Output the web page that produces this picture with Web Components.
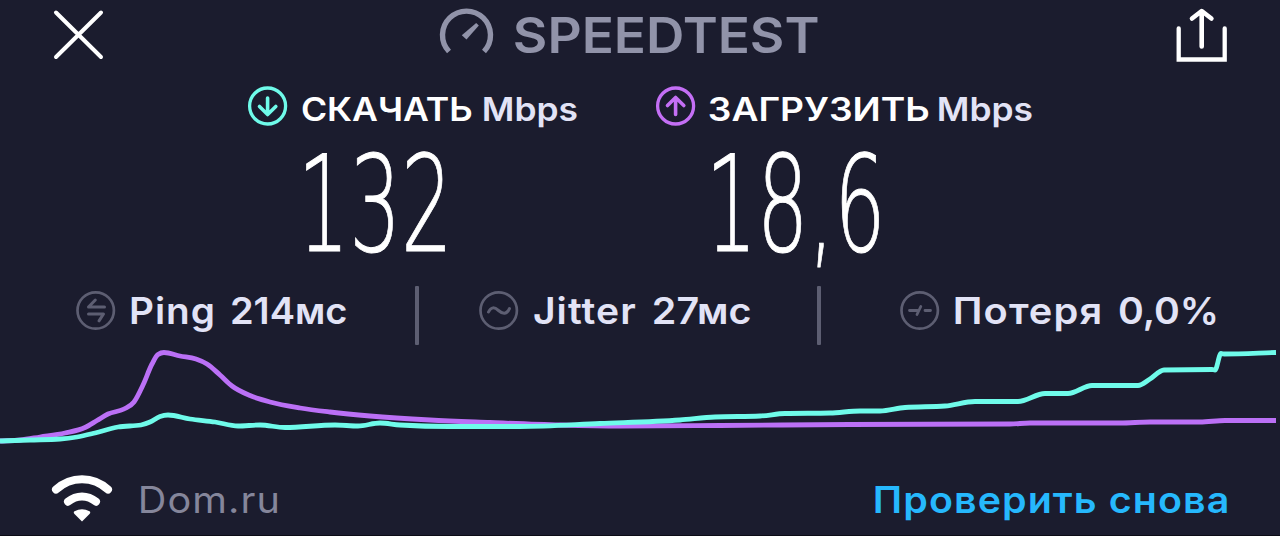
<!DOCTYPE html>
<html lang="ru">
<head>
<meta charset="utf-8">
<title>Speedtest</title>
<style>
  body {
    margin: 0;
    background: #1b1c2e;
    font-family: Inter, "Liberation Sans", sans-serif;
  }
</style>
</head>
<body>
<speed-result></speed-result>

<script>
const pen = document.createElement('canvas').getContext('2d');

// One line of text whose glyphs fill a box of width x cap height.
class FitText extends HTMLElement {
  connectedCallback() {
    const width = Number(this.getAttribute('width'));
    const cap = Number(this.getAttribute('cap'));
    const spacing = this.getAttribute('spacing') || '0px';
    const style = getComputedStyle(this);
    const font = (size) => `${style.fontWeight} ${size}px ${style.fontFamily}`;
    pen.letterSpacing = '0px';
    pen.font = font(1000);
    const size = cap * 1000 / pen.measureText('H').actualBoundingBoxAscent;
    pen.font = font(size);
    pen.letterSpacing = spacing;
    const m = pen.measureText(this.textContent);
    const scale = width / (m.actualBoundingBoxLeft + m.actualBoundingBoxRight);
    const up = m.fontBoundingBoxAscent;
    const down = m.fontBoundingBoxDescent;
    const baseline = (size - up - down) / 2 + up;
    this.attachShadow({ mode: 'open' });
    this.shadowRoot.innerHTML = `
      <style>
        :host {
          display: block;
          flex: none;
          width: ${width}px;
          height: ${cap}px;
        }
        span {
          display: block;
          width: max-content;
          white-space: pre;
          font-size: ${size}px;
          line-height: ${size}px;
          letter-spacing: ${spacing};
          transform-origin: 0 0;
          transform: translate(${m.actualBoundingBoxLeft * scale}px, ${cap - baseline}px) scaleX(${scale});
        }
      </style>
      <span><slot></slot></span>
    `;
  }
}

const ICONS = {
  close: [51, 51, '<path d="M3 3.5 48 48M48 3.5 3 48" stroke-width="4"/>'],
  gauge: [54, 48, `
    <path d="M9 42.500A24 24 0 1 1 44 42.500" stroke-width="5.400" stroke-linecap="butt"/>
    <path d="M36.200 14 38.800 16.500 26.500 30.500 21.800 26.200Z" fill="currentColor" stroke="none"/>`],
  share: [52, 54, `
    <path d="M2.700 19.500V50.500H48.700V19.500" stroke-width="4.300" stroke-linejoin="miter"/>
    <path d="M25.700 37.500V2.500M16 9.500 25.700 2 35.400 9.500" stroke-width="4.600"/>`],
  down: [40, 40, `
    <circle cx="19.600" cy="20" r="18" stroke-width="3.300"/>
    <path d="M19.600 12V28M11.500 20.500 19.600 28.500 27.800 20.500" stroke-width="3.600"/>`],
  up: [40, 40, `
    <circle cx="19.600" cy="20" r="18" stroke-width="3.300"/>
    <path d="M19.600 28.500V12M11.500 19.500 19.600 11.500 27.800 19.500" stroke-width="3.600"/>`],
  ping: [40, 40, `
    <circle cx="19.700" cy="19.500" r="18.200" stroke-width="2.700"/>
    <path d="M28.500 16H12.500L19.300 9M12.500 23H27.500L23 29.800" stroke-width="3"/>`],
  jitter: [40, 40, `
    <circle cx="19.700" cy="19.500" r="18.200" stroke-width="2.700"/>
    <path d="M9.500 21C12 15.500 15.500 16 19.500 19.500S27.500 24 30.500 17.500" stroke-width="3"/>`],
  loss: [40, 40, `
    <circle cx="19.700" cy="19.500" r="18.200" stroke-width="2.700"/>
    <path d="M9.500 19.500H17.500M17 23.500 20.800 15.500M25 19.500H30.500" stroke-width="2.800"/>`],
  wifi: [60, 46, `
    <path d="M4 15.500C19 1.800 41 1.800 56 15.500" stroke-width="8"/>
    <path d="M16 27.700C24.500 20.800 35.500 20.800 44 27.700" stroke-width="8"/>
    <path d="M22.500 37.300Q30 33 37.500 37.300 39 38.500 37.500 40L30 47.500 22.500 40Q21 38.500 22.500 37.300Z" fill="currentColor" stroke="none"/>`]
};

class UiIcon extends HTMLElement {
  connectedCallback() {
    const [w, h, body] = ICONS[this.getAttribute('name')];
    this.attachShadow({ mode: 'open' });
    this.shadowRoot.innerHTML = `
      <style>
        :host { display: block; flex: none; width: ${w}px; height: ${h}px; }
        svg { display: block; overflow: visible; }
      </style>
      <svg width="${w}" height="${h}" fill="none" stroke="currentColor" stroke-linecap="round" stroke-linejoin="round">${body}</svg>
    `;
  }
}

class SpeedMetric extends HTMLElement {
  connectedCallback() {
    this.attachShadow({ mode: 'open' });
    this.shadowRoot.innerHTML = `
      <style>
        :host { display: block; }
        .label {
          display: flex;
          align-items: center;
          height: 40px;
          font-weight: 600;
          color: #fff;
        }
        ui-icon { color: var(--accent); margin-right: var(--label-gap, 14px); }
        .title { padding-top: 5px; }
        .unit { padding: 5px 0 0 var(--unit-gap, 12px); color: #e2e3f6; }
        .value {
          padding: 27px 0 0 58px;
          font-family: "DejaVu Sans", sans-serif;
          font-weight: 200;
          color: #fff;
          -webkit-text-stroke: 1px #fff;
        }
      </style>
      <div class="label">
        <ui-icon name="${this.getAttribute('icon')}"></ui-icon>
        <div class="title"><slot name="title"></slot></div>
        <div class="unit"><slot name="unit"></slot></div>
      </div>
      <div class="value"><slot></slot></div>
    `;
  }
}

class StatItem extends HTMLElement {
  connectedCallback() {
    this.attachShadow({ mode: 'open' });
    this.shadowRoot.innerHTML = `
      <style>
        :host {
          display: flex;
          align-items: center;
          font-weight: 600;
          color: #e2e3f6;
        }
        ui-icon { color: #5d5e72; margin-right: 15px; }
        slot[name="value"] { display: block; margin-left: 19px; }
      </style>
      <ui-icon name="${this.getAttribute('icon')}"></ui-icon>
      <slot></slot>
      <slot name="value"></slot>
    `;
  }
}

const DOWNLOAD = [[0, 441], [30, 440], [60, 439], [77, 437], [95, 433], [118, 427], [141, 425], [150, 422],
  [160, 416.5], [168, 415], [190, 419], [215, 422], [238, 426], [260, 425], [285, 427.5], [335, 425],
  [358, 426], [380, 423], [400, 425], [450, 426.5], [520, 426.5], [600, 423.5], [680, 420], [715, 417],
  [760, 416], [785, 413.5], [830, 413], [860, 411], [880, 411], [905, 407.5], [945, 406], [975, 401.5],
  [1018, 401.5], [1045, 393.5], [1068, 393.5], [1092, 385.5], [1138, 385.5], [1150, 379], [1164, 370],
  [1212, 369.5], [1215, 370], [1221, 353.5], [1224, 354], [1276, 352.5]];
const UPLOAD = [[0, 441], [20, 440], [40, 437], [65, 433], [85, 427.5], [97, 420.5], [108, 414], [124, 409],
  [134, 402], [143, 385], [152, 364], [158, 354.5], [164, 352.5], [180, 356], [196, 359], [207, 364], [220, 375],
  [232, 386], [250, 395.5], [270, 402], [300, 408], [330, 412], [370, 416], [430, 420], [490, 422.5],
  [560, 425], [620, 426], [720, 425.5], [850, 424.5], [1010, 424], [1030, 423], [1120, 423], [1150, 422],
  [1200, 422], [1225, 420.5], [1276, 420.5]];

// Monotone cubic through the samples
function curve(points) {
  const step = (i) => points[i + 1][0] - points[i][0];
  const slope = (i) => (points[i + 1][1] - points[i][1]) / step(i);
  const tangents = points.map((p, i) => {
    if (i === 0) return slope(0);
    if (i === points.length - 1) return slope(i - 1);
    const a = slope(i - 1);
    const b = slope(i);
    if (a * b <= 0) return 0;
    const mean = (a * step(i) + b * step(i - 1)) / (step(i - 1) + step(i));
    return Math.sign(a) * Math.min(Math.abs(mean), 2 * Math.abs(a), 2 * Math.abs(b));
  });
  let d = `M${points[0]}`;
  for (let i = 1; i < points.length; i++) {
    const [x0, y0] = points[i - 1];
    const [x1, y1] = points[i];
    const h = (x1 - x0) / 3;
    d += `C${x0 + h},${y0 + tangents[i - 1] * h} ${x1 - h},${y1 - tangents[i] * h} ${x1},${y1}`;
  }
  return d;
}

class SpeedChart extends HTMLElement {
  connectedCallback() {
    this.attachShadow({ mode: 'open' });
    this.shadowRoot.innerHTML = `
      <style>
        :host { display: block; height: 104px; }
        svg { display: block; }
        path { fill: none; stroke-width: 4.8; }
      </style>
      <svg width="1280" height="104" viewBox="0 346 1280 104">
        <path d="${curve(UPLOAD)}" stroke="#bb70f6"/>
        <path d="${curve(DOWNLOAD)}" stroke="#6ffbea"/>
      </svg>
    `;
  }
}

class SpeedResult extends HTMLElement {
  connectedCallback() {
    this.attachShadow({ mode: 'open' });
    this.shadowRoot.innerHTML = `
      <style>
        :host {
          display: flex;
          flex-direction: column;
          box-sizing: border-box;
          width: 1280px;
          height: 536px;
          overflow: hidden;
          border-bottom: 1px solid #0c0c16;
          color: #fff;
        }
        header {
          display: grid;
          grid-template-columns: 387px 1fr 51px;
          align-items: start;
          height: 78px;
          padding: 9px 53px 0;
          box-sizing: border-box;
        }
        .brand {
          display: flex;
          color: #9193a9;
          font-weight: 600;
        }
        .brand fit-text { margin: 8px 0 0 21px; }
        .metrics {
          display: grid;
          grid-template-columns: 408px 1fr;
          height: 208px;
          padding: 8px 0 0 248px;
          box-sizing: border-box;
        }
        .stats {
          display: flex;
          align-items: flex-start;
          height: 60px;
          padding-left: 76px;
        }
        stat-item { padding-top: 5px; }
        hr {
          width: 4px;
          height: 59px;
          margin: 0;
          border: 0;
          border-radius: 1px;
          background: #5d5e72;
        }
        footer {
          display: flex;
          justify-content: space-between;
          padding: 24px 53px 0 52px;
        }
        .network { display: flex; }
        .network fit-text { margin: 13px 0 0 29px; color: #85869b; }
        .again { margin-top: 13px; color: #26b8fd; font-weight: 600; }
      </style>
      <header>
        <ui-icon name="close"></ui-icon>
        <div class="brand">
          <ui-icon name="gauge"></ui-icon>
          <fit-text width="303" cap="36">SPEEDTEST</fit-text>
        </div>
        <ui-icon name="share"></ui-icon>
      </header>
      <section class="metrics">
        <speed-metric icon="down" style="--accent: #6ffbea">
          <fit-text slot="title" width="170" cap="24">СКАЧАТЬ</fit-text>
          <fit-text slot="unit" width="93" cap="24">Mbps</fit-text>
          <fit-text width="139" cap="98">132</fit-text>
        </speed-metric>
        <speed-metric icon="up" style="--accent: #c46ff5; --label-gap: 13px; --unit-gap: 10px">
          <fit-text slot="title" width="220" cap="24">ЗАГРУЗИТЬ</fit-text>
          <fit-text slot="unit" width="93" cap="24">Mbps</fit-text>
          <fit-text width="165" cap="98">18,6</fit-text>
        </speed-metric>
      </section>
      <section class="stats">
        <stat-item icon="ping">
          <fit-text width="82" cap="27" spacing="1px">Ping</fit-text>
          <fit-text slot="value" width="114" cap="27">214мс</fit-text>
        </stat-item>
        <hr style="margin-left: 69px">
        <stat-item icon="jitter" style="margin-left: 60px">
          <fit-text width="101" cap="27" spacing="1px">Jitter</fit-text>
          <fit-text slot="value" width="96" cap="27">27мс</fit-text>
        </stat-item>
        <hr style="margin-left: 67px">
        <stat-item icon="loss" style="margin-left: 79px">
          <fit-text width="145" cap="27" spacing="1px">Потеря</fit-text>
          <fit-text slot="value" width="97" cap="27">0,0%</fit-text>
        </stat-item>
      </section>
      <speed-chart></speed-chart>
      <footer>
        <div class="network">
          <ui-icon name="wifi"></ui-icon>
          <fit-text width="136" cap="27" spacing="1px">Dom.ru</fit-text>
        </div>
        <fit-text class="again" width="352" cap="27" spacing="1px">Проверить снова</fit-text>
      </footer>
    `;
  }
}

customElements.define('fit-text', FitText);
customElements.define('ui-icon', UiIcon);
customElements.define('speed-metric', SpeedMetric);
customElements.define('stat-item', StatItem);
customElements.define('speed-chart', SpeedChart);
customElements.define('speed-result', SpeedResult);
</script>
</body>
</html>
